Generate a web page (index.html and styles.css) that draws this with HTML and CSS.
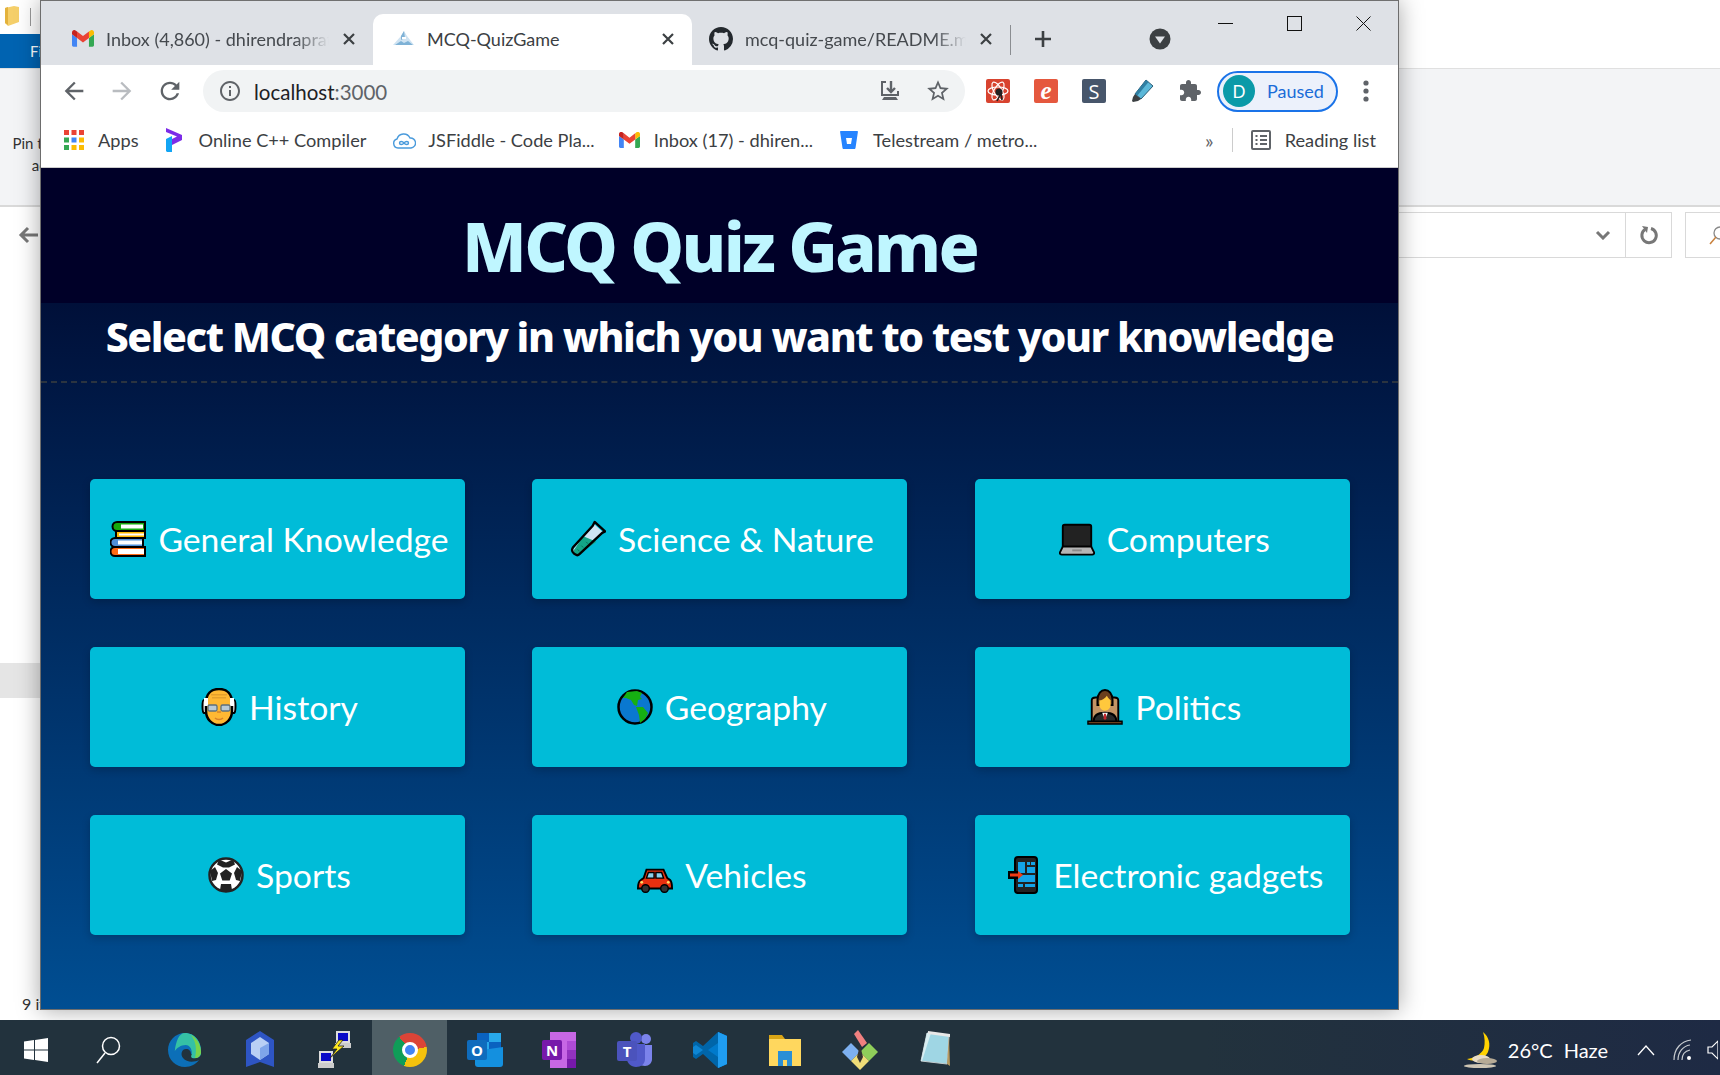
FILE: index.html
```html
<!DOCTYPE html>
<html lang="en">
<head>
  <meta charset="UTF-8">
  <title>MCQ-QuizGame</title>
  <link rel="stylesheet" href="styles.css">
</head>
<body>
  <svg class="defs" width="0" height="0">
    <symbol id="gmail" viewBox="0 0 24 18">
      <path fill="#4285f4" d="M1.6 18H5.5V8.5L0 4.4V16.4C0 17.3.7 18 1.6 18z"/>
      <path fill="#34a853" d="M18.5 18h3.9c.9 0 1.6-.7 1.6-1.6V4.4l-5.5 4.1z"/>
      <path fill="#fbbc04" d="M18.5 1.4v7.1L24 4.4V2.2c0-2-2.3-3.2-3.9-2z"/>
      <path fill="#ea4335" d="M5.5 8.5V1.4L12 6.3l6.5-4.9v7.1L12 13.4z"/>
      <path fill="#c5221f" d="M0 2.2v2.2l5.5 4.1V1.4L3.9.2C2.3-1 0 .2 0 2.2z"/>
    </symbol>
    <symbol id="close" viewBox="0 0 16 16">
      <path d="M3 3l10 10M13 3L3 13" stroke="#3c4043" stroke-width="2.2" fill="none"/>
    </symbol>
  </svg>

  <div class="desktop">
    <!-- file explorer behind the browser -->
    <div class="explorer">
      <div class="ex-title">
        <svg class="ex-folder" width="14" height="20" viewBox="0 0 14 20"><path fill="#f5cf6a" d="M0 2l9-2 5 1v15l-11 4-3-3z"/><path fill="#e3b23c" d="M0 2l3-1v18l-3-2z"/></svg>
        <span class="ex-sep"></span>
      </div>
      <div class="ex-strip"><span class="ex-strip-blue"></span><span class="ex-strip-gray"></span></div>
      <div class="ex-tabs"><span class="ex-file">File</span></div>
      <div class="ex-ribbon"><div class="ex-pin">Pin to Quick<br>access</div></div>
      <div class="ex-address">
        <svg class="ex-back" width="20" height="18" viewBox="0 0 20 18"><path d="M20 9H3M10 2L3 9l7 7" fill="none" stroke="#777" stroke-width="3"/></svg>
        <div class="ex-combo">
          <svg width="16" height="10" viewBox="0 0 16 10"><path d="M2 2l6 6 6-6" fill="none" stroke="#777" stroke-width="3"/></svg>
        </div>
        <div class="ex-refresh">
          <svg width="20" height="20" viewBox="0 0 20 20"><path d="M6 4.500a7.200 7.200 0 1 0 6-1" fill="none" stroke="#777" stroke-width="3"/><path fill="#777" d="M3 1l6 1-1 6z"/></svg>
        </div>
        <div class="ex-search">
          <svg width="20" height="20" viewBox="0 0 20 20"><circle cx="12" cy="8" r="6" fill="none" stroke="#888" stroke-width="1.3"/><path d="M8 12l-6 7" stroke="#c9803c" stroke-width="1.5"/></svg>
        </div>
      </div>
      <div class="ex-selected"></div>
      <div class="ex-status">9 items</div>
    </div>

    <!-- browser window -->
    <div class="browser">
      <div class="tabstrip">
        <div class="tab tab-gmail">
          <svg class="favicon" width="22" height="17"><use href="#gmail"/></svg>
          <span class="tab-title">Inbox (4,860) - dhirendrapratap</span>
          <svg class="tab-close" width="16" height="16"><use href="#close"/></svg>
        </div>
        <div class="tab tab-active">
          <svg class="favicon" width="23" height="17" viewBox="0 0 23 17"><path fill="#cfe3f2" d="M1 15l8-9 3-5 3 5 7 9z"/><path fill="#7fb2d6" d="M9 6l3-5 1 7-4 2zM3 15l6-4 3 2 4-2 5 4z"/><path fill="#fff" d="M10 7h4v2h-4z"/></svg>
          <span class="tab-title">MCQ-QuizGame</span>
          <svg class="tab-close" width="16" height="16"><use href="#close"/></svg>
        </div>
        <div class="tab tab-github">
          <svg class="favicon" width="24" height="24" viewBox="0 0 16 16"><path fill="#24292e" d="M8 0C3.58 0 0 3.58 0 8c0 3.54 2.29 6.53 5.47 7.59.4.07.55-.17.55-.38 0-.19-.01-.82-.01-1.49-2.01.37-2.53-.49-2.69-.94-.09-.23-.48-.94-.82-1.13-.28-.15-.68-.52-.01-.53.63-.01 1.08.58 1.23.82.72 1.21 1.87.87 2.33.66.07-.52.28-.87.51-1.07-1.78-.2-3.64-.89-3.64-3.95 0-.87.31-1.59.82-2.15-.08-.2-.36-1.02.08-2.12 0 0 .67-.21 2.2.82.64-.18 1.32-.27 2-.27.68 0 1.36.09 2 .27 1.53-1.04 2.2-.82 2.2-.82.44 1.1.16 1.92.08 2.12.51.56.82 1.27.82 2.15 0 3.07-1.87 3.75-3.65 3.95.29.25.54.73.54 1.48 0 1.07-.01 1.93-.01 2.2 0 .21.15.46.55.38A8.013 8.013 0 0016 8c0-4.42-3.58-8-8-8z"/></svg>
          <span class="tab-title">mcq-quiz-game/README.md at main</span>
          <svg class="tab-close" width="16" height="16"><use href="#close"/></svg>
        </div>
        <span class="tab-sep"></span>
        <div class="strip-btn">
          <svg width="20" height="20" viewBox="0 0 20 20"><path d="M10 2v16M2 10h16" stroke="#3c4043" stroke-width="2.6"/></svg>
        </div>
        <div class="strip-btn strip-search">
          <svg width="22" height="22" viewBox="0 0 22 22"><circle cx="11" cy="11" r="10.5" fill="#3c4043"/><path fill="#dee1e6" d="M6 8.500h10l-5 7z"/></svg>
        </div>
        <div class="win-controls">
          <div class="win-btn"><span class="win-min"></span></div>
          <div class="win-btn"><span class="win-max"></span></div>
          <div class="win-btn">
            <svg width="15" height="15" viewBox="0 0 15 15"><path d="M.5.5l14 14M14.500.5l-14 14" stroke="#111" stroke-width="1"/></svg>
          </div>
        </div>
      </div>

      <div class="toolbar">
        <div class="tool-btn"><svg width="28" height="28" viewBox="0 0 24 24"><path fill="#5f6368" d="M20 11H7.83l5.59-5.59L12 4l-8 8 8 8 1.41-1.41L7.83 13H20v-2z"/></svg></div>
        <div class="tool-btn"><svg width="28" height="28" viewBox="0 0 24 24"><path fill="#b9bcc0" d="M4 11h12.17l-5.59-5.59L12 4l8 8-8 8-1.41-1.41L16.17 13H4v-2z"/></svg></div>
        <div class="tool-btn"><svg width="28" height="28" viewBox="0 0 24 24"><path fill="#5f6368" d="M17.65 6.35C16.2 4.9 14.21 4 12 4c-4.42 0-7.99 3.58-7.99 8s3.57 8 7.99 8c3.73 0 6.84-2.55 7.73-6h-2.08c-.82 2.33-3.04 4-5.65 4-3.31 0-6-2.69-6-6s2.69-6 6-6c1.66 0 3.14.69 4.22 1.78L13 11h7V4l-2.35 2.35z"/></svg></div>
        <div class="omnibox">
          <svg class="omni-info" width="24" height="24" viewBox="0 0 24 24"><path fill="#5f6368" d="M11 7h2v2h-2zm0 4h2v6h-2zm1-9C6.48 2 2 6.48 2 12s4.48 10 10 10 10-4.48 10-10S17.52 2 12 2zm0 18c-4.41 0-8-3.59-8-8s3.59-8 8-8 8 3.59 8 8-3.59 8-8 8z"/></svg>
          <span class="omni-url">localhost<span class="omni-port">:3000</span></span>
          <div class="omni-actions">
            <div class="tool-btn"><svg width="22" height="22" viewBox="0 0 22 22"><path fill="none" stroke="#5f6368" stroke-width="2" d="M7 2H3v13h16v-4"/><path fill="#5f6368" d="M5 17h12l2 3H3z"/><path fill="none" stroke="#5f6368" stroke-width="2.4" d="M12 1v10M8 8l4 4 4-4"/></svg></div>
            <div class="tool-btn"><svg width="26" height="26" viewBox="0 0 24 24"><path fill="#5f6368" d="M22 9.24l-7.19-.62L12 2 9.19 8.63 2 9.24l5.46 4.73L5.82 21 12 17.27 18.18 21l-1.63-7.03L22 9.24zM12 15.4l-3.76 2.27 1-4.28-3.32-2.88 4.38-.38L12 6.1l1.71 4.04 4.38.38-3.32 2.88 1 4.28L12 15.4z"/></svg></div>
          </div>
        </div>
        <div class="extensions">
          <div class="tool-btn">
            <svg width="24" height="24" viewBox="0 0 24 24"><rect width="24" height="24" rx="2" fill="#d8432f"/><g fill="none" stroke="#fff" stroke-width="1.2"><ellipse cx="12" cy="12" rx="10" ry="4"/><ellipse cx="12" cy="12" rx="10" ry="4" transform="rotate(60 12 12)"/><ellipse cx="12" cy="12" rx="10" ry="4" transform="rotate(120 12 12)"/></g><circle cx="13" cy="13" r="3.5" fill="#222"/><path d="M11 22l3-6M16 21l-1-6" stroke="#222" stroke-width="1.6"/></svg>
          </div>
          <div class="tool-btn"><span class="ext-letter ext-e">e</span></div>
          <div class="tool-btn"><span class="ext-letter ext-s">S</span></div>
          <div class="tool-btn">
            <svg width="24" height="24" viewBox="0 0 24 24"><path fill="#5bb8d9" stroke="#2d5c75" stroke-width="1" d="M16 1l7 6-12 13-6-5z"/><path fill="#2f7fa3" d="M16 1l2.5 2L7 17l-2-2z"/><path fill="#3c4043" d="M5 15l6 5-3 2-5 1-1-1 1-4z"/></svg>
          </div>
          <div class="tool-btn">
            <svg width="24" height="24" viewBox="0 0 24 24"><path fill="#5f6368" d="M20.5 11H19V7c0-1.1-.9-2-2-2h-4V3.5C13 2.12 11.88 1 10.5 1S8 2.12 8 3.5V5H4c-1.1 0-1.99.9-1.99 2v3.8H3.5c1.49 0 2.7 1.21 2.7 2.7s-1.21 2.7-2.7 2.7H2V20c0 1.1.9 2 2 2h3.8v-1.5c0-1.49 1.21-2.7 2.7-2.7 1.49 0 2.7 1.21 2.7 2.7V22H17c1.1 0 2-.9 2-2v-4h1.5c1.38 0 2.5-1.12 2.5-2.5S21.88 11 20.5 11z"/></svg>
          </div>
        </div>
        <div class="profile"><span class="avatar">D</span><span class="profile-label">Paused</span></div>
        <div class="tool-btn tool-menu"><svg width="6" height="24" viewBox="0 0 6 24"><circle cx="3" cy="4" r="2.6" fill="#5f6368"/><circle cx="3" cy="12" r="2.6" fill="#5f6368"/><circle cx="3" cy="20" r="2.6" fill="#5f6368"/></svg></div>
      </div>

      <div class="bookmarks">
        <div class="bm">
          <svg width="20" height="20" viewBox="0 0 20 20"><g fill="#ea4335"><rect width="5" height="5"/><rect x="7.5" width="5" height="5"/><rect x="15" width="5" height="5"/></g><rect y="7.5" width="5" height="5" fill="#34a853"/><rect x="7.5" y="7.5" width="5" height="5" fill="#4285f4"/><rect x="15" y="7.5" width="5" height="5" fill="#fbbc04"/><rect y="15" width="5" height="5" fill="#34a853"/><rect x="7.5" y="15" width="5" height="5" fill="#fbbc04"/><rect x="15" y="15" width="5" height="5" fill="#fbbc04"/></svg>
          <span>Apps</span>
        </div>
        <div class="bm bm-p">
          <svg width="16" height="24" viewBox="0 0 16 24"><path fill="#7c2be8" d="M0 0l16 7v5L6 17v-6l5-2.5L0 4z"/><path fill="#12a5f4" d="M0 11l6-3v16H1l-1-1z"/></svg>
          <span>Online C++ Compiler</span>
        </div>
        <div class="bm bm-cloud">
          <svg width="24" height="20" viewBox="0 0 24 20"><path fill="#fff" stroke="#4a9bdc" stroke-width="1.4" d="M6 18a4.6 4.6 0 0 1-1-9 7 7 0 0 1 13-1 5 5 0 0 1 1 10z"/><path fill="none" stroke="#4a9bdc" stroke-width="1.4" d="M12 13c-1.500-2-4.500-2-4.500 0s3 2 4.500 0c1.500-2 4.500-2 4.500 0s-3 2-4.500 0z"/></svg>
          <span>JSFiddle - Code Pla...</span>
        </div>
        <div class="bm bm-inbox">
          <svg width="21" height="16"><use href="#gmail"/></svg>
          <span>Inbox (17) - dhiren...</span>
        </div>
        <div class="bm bm-bucket">
          <svg width="18" height="20" viewBox="0 0 18 20"><path fill="#2684ff" d="M1 1h16c.6 0 1 .4.9 1L15.500 18c-.1.500-.5 1-1 1H3.500c-.5 0-.9-.5-1-1L.1 2C0 1.400.4 1 1 1z"/><path fill="#fff" d="M6 8h6l-1 6H7z"/></svg>
          <span>Telestream / metro...</span>
        </div>
        <span class="bm-more">»</span>
        <span class="bm-sep"></span>
        <div class="bm bm-reading">
          <svg width="20" height="20" viewBox="0 0 20 20"><rect x="1" y="1" width="18" height="18" rx="1" fill="none" stroke="#5f6368" stroke-width="2"/><path d="M4.500 6h2M9 6h7M4.500 10h2M9 10h7M4.500 14h2M9 14h7" stroke="#5f6368" stroke-width="2"/></svg>
          <span>Reading list</span>
        </div>
      </div>

      <!-- the quiz app -->
      <div class="app">
        <header class="app-header"><h1>MCQ Quiz Game</h1></header>
        <h2 class="app-sub">Select MCQ category in which you want to test your knowledge</h2>
        <div class="categories">
          <button class="cat">
            <svg class="emoji" viewBox="0 0 36 36"><path fill="#ff6a13" stroke="#000" stroke-width="2" d="M5 26h30v9H5a4.500 4.500 0 0 1 0-9z"/><path fill="#fff" d="M8 28h26v5H8z"/><path fill="#4f8fd8" stroke="#000" stroke-width="2" d="M5 17h28v9H5a4.500 4.500 0 0 1 0-9z"/><path fill="#fff" d="M8 19.500h24v4H8z"/><path fill="#ffb900" stroke="#000" stroke-width="2" d="M6 10h29v7H6z"/><path fill="#fff" d="M9 12.500h25v2H9z"/><path fill="#16a90e" stroke="#000" stroke-width="2" d="M7 1h28v9H7a4.500 4.500 0 0 1 0-9z"/><path fill="#fff" d="M11 3.500h22v4H11z"/></svg>
            <span>General Knowledge</span>
          </button>
          <button class="cat">
            <svg class="emoji" viewBox="0 0 38 38"><path fill="#cfe5f4" d="M25 3l10 9L9 36c-3 2-8-2-6-6L24 6z"/><path fill="#13a587" d="M14 16l14 6L9 35c-3 2-6-1-5-4z"/><path fill="none" stroke="#000" stroke-width="2.500" stroke-linejoin="round" d="M26 1l11 10-3 1.500L10 35c-3 3-10-2-7-7L24 5z"/><path d="M12 26l2 2M17 22l2 2M8 30l2 2" stroke="#0a6d58" stroke-width="1"/></svg>
            <span>Science &amp; Nature</span>
          </button>
          <button class="cat">
            <svg class="emoji" viewBox="0 0 38 36"><path fill="#222" stroke="#000" stroke-width="2" d="M6 3h26a2 2 0 0 1 2 2v21H4V5a2 2 0 0 1 2-2z"/><path fill="#b5b5b5" stroke="#000" stroke-width="2" d="M4 26h30l3 6c.500 1.500-.500 2.500-2 2.500H3c-1.500 0-2.500-1-2-2.500z"/><path fill="#8a8a8a" d="M14 29h10v2H14z"/></svg>
            <span>Computers</span>
          </button>
          <button class="cat">
            <svg class="emoji" viewBox="0 0 36 38"><path fill="#fff" stroke="#000" stroke-width="2" d="M3 12h30c2 0 2 12 0 13H3c-2-1-2-13 0-13z"/><path fill="#ffb833" stroke="#000" stroke-width="2.500" d="M18 1c8 0 13 5 13 14v8c0 8-6 14-13 14S5 31 5 23v-8C5 6 10 1 18 1z"/><path fill="#e5a02c" d="M10 6h16v1.500H10zM11 9h14v1.500H11z"/><path fill="#fff" d="M3 10h4v8H3zM29 10h4v8h-4z"/><g fill="#b9cad6" stroke="#5c6f7d" stroke-width="1.300"><rect x="7" y="17" width="9" height="6" rx="1.500"/><rect x="20" y="17" width="9" height="6" rx="1.500"/></g><path fill="none" stroke="#d8822a" stroke-width="1.500" d="M16 24h4M14 30c2 2 6 2 8 0"/></svg>
            <span>History</span>
          </button>
          <button class="cat">
            <svg class="emoji" viewBox="0 0 36 36"><circle cx="18" cy="18" r="16.500" fill="#0a78d0" stroke="#000" stroke-width="2.500"/><path fill="#16b012" d="M10 3l10-1 5 2-2 4 2 2-4 1-1 6-3-1-3-5-5-2-3 0zM19 18l7 0 5 6-3 6-5 4-1-8z"/></svg>
            <span>Geography</span>
          </button>
          <button class="cat">
            <svg class="emoji" viewBox="0 0 38 38"><path fill="#c49464" stroke="#000" stroke-width="2" d="M5 12c0-2 2-3 4-3h20c2 0 4 1 4 3v24H5z"/><path fill="#6b3f1e" stroke="#000" stroke-width="2" d="M11 12c0-7 4-11 8-11s8 4 8 11v5H11z"/><path fill="#ffc83d" d="M13 12c2 0 6-2 8-5 1 2 3 4 4 5v5c0 3-3 6-6 6s-6-3-6-6z"/><path fill="#2a2a2a" stroke="#000" stroke-width="2" d="M7 34c0-6 4-9 12-9s12 3 12 9v2H7z"/><path fill="#fff" d="M16 25h6l-3 7z"/><path fill="#c4262e" d="M18 26h2l.500 5-1.500 2-1.500-2z"/><path fill="#6b3f1e" stroke="#000" stroke-width="1.500" d="M1 34h36v3H1z"/></svg>
            <span>Politics</span>
          </button>
          <button class="cat">
            <svg class="emoji" viewBox="0 0 36 36"><circle cx="18" cy="18" r="16.500" fill="#fff" stroke="#222" stroke-width="2.500"/><path fill="#222" d="M18 12l6 4.500-2.300 7h-7.400L12 16.500zM11 2.500l7 3 7-3 2 5-6 3h-6l-6-3zM2 14l5-4 3 6-2 7-4 1zM34 14l-5-4-3 6 2 7 4 1zM12 33l1-6 10 0 1 6-6 2z"/></svg>
            <span>Sports</span>
          </button>
          <button class="cat">
            <svg class="emoji emoji-car" viewBox="0 0 38 26"><path fill="#e8300f" stroke="#000" stroke-width="2" d="M10 2h18l4 9 3 2c1 1 2 3 2 9H1c0-6 1-8 3-9l3-2z"/><path fill="#8bd0ea" stroke="#000" stroke-width="1.500" d="M12 5h6v6H10zM20 5h6l2 6h-8z"/><circle cx="9" cy="22" r="4" fill="#333" stroke="#000" stroke-width="1.500"/><circle cx="29" cy="22" r="4" fill="#333" stroke="#000" stroke-width="1.500"/><circle cx="5" cy="15.500" r="1.500" fill="#ffe066"/><circle cx="33" cy="15.500" r="1.500" fill="#ffe066"/></svg>
            <span>Vehicles</span>
          </button>
          <button class="cat">
            <svg class="emoji" viewBox="0 0 36 38"><rect x="10" y="1" width="22" height="36" rx="3" fill="#222" stroke="#000" stroke-width="2"/><path fill="#14a4e8" d="M13 6h7v11h-7zM22 6h3v3h-3zM26 6h4v3h-4zM22 11h8v6h-8zM13 19h17v7H13zM13 28h5v3h-5zM20 28h10v3H20z"/><path fill="#000" d="M3 15h10v8H3z"/><path fill="#ee3b14" d="M5 17.500h8V15l5 4-5 4v-2.500H5z"/></svg>
            <span>Electronic gadgets</span>
          </button>
        </div>
      </div>
    </div>
  </div>

  <!-- windows taskbar -->
  <div class="taskbar">
    <div class="tb-item tb-start">
      <svg width="24" height="24" viewBox="0 0 24 24"><path fill="#fff" d="M0 3.500l10-1.400v9.300H0zM11 2l13-2v11.400H11zM0 12.500h10v9.400L0 20.500zM11 12.500h13V24l-13-2z"/></svg>
    </div>
    <div class="tb-item tb-start">
      <svg width="26" height="28" viewBox="0 0 26 28"><circle cx="16" cy="10" r="8.500" fill="none" stroke="#fff" stroke-width="1.500"/><path d="M10 17l-8 10" stroke="#fff" stroke-width="1.500"/></svg>
    </div>
    <div class="tb-apps">
      <div class="tb-item">
        <svg width="36" height="36" viewBox="0 0 36 36"><path fill="#0c6fb8" d="M18 1C8 1 1 9 1 18c0 10 8 17 17 17 6 0 11-3 14-7-4 2-12 3-16-2-3-4-1-9 3-9 3 0 5 2 5 5h10C35 10 28 1 18 1z"/><path fill="#35c1a5" d="M18 1C28 1 35 10 34 22c-1 4-5 5-9 4-2-2 .2-3-.200-5 .200-5-3-8-6-8-5 0-9 3-11 6C9 9 12 1 18 1z"/><path fill="#7ad44a" d="M24 3c6 3 10 10 10 18-1 3-3 5-6 5 2-8 1-17-4-23z"/></svg>
      </div>
      <div class="tb-item">
        <svg width="30" height="38" viewBox="0 0 30 38"><path fill="#2e55c4" d="M15 0l14 9v27l-14-5-14 5V9z"/><path fill="#b9cff5" d="M15 6l9 6v11l-9 6-9-6V12z"/><path fill="#7fa5ea" d="M15 17l9-5v11l-9 6z"/></svg>
      </div>
      <div class="tb-item">
        <svg width="36" height="38" viewBox="0 0 36 38"><rect x="20" y="1" width="12" height="10" fill="#0a0ac8" stroke="#ddd" stroke-width="2"/><path fill="#ccc" d="M18 12h16v5H18z"/><rect x="3" y="21" width="12" height="10" fill="#0a0ac8" stroke="#ddd" stroke-width="2"/><path fill="#ccc" d="M1 32h16v5H1z"/><path fill="#ffe91f" stroke="#222" stroke-width=".8" d="M22 9l-7 9h5l-7 9 14-12h-6l5-6z"/></svg>
      </div>
      <div class="tb-item tb-active">
        <span class="chrome-logo"><span class="chrome-core"></span></span>
      </div>
      <div class="tb-item">
        <svg width="36" height="36" viewBox="0 0 36 36"><path fill="#0a62c0" d="M10 1h24v17H10z"/><path fill="#28a8ea" d="M22 1h12v9H22zM10 10h12v9H10z"/><path fill="#1490df" d="M8 19l28-4v17c0 2-1 3-3 3H11c-2 0-3-1-3-3z"/><rect y="8" width="20" height="20" rx="2" fill="#0f6cbd"/><text class="tb-glyph" x="10" y="24" text-anchor="middle">O</text></svg>
      </div>
      <div class="tb-item">
        <svg width="36" height="36" viewBox="0 0 36 36"><path fill="#c767e5" d="M8 0h26v36H8z"/><path fill="#ae4bd5" d="M25 9h9v9h-9z"/><path fill="#9332bf" d="M25 18h9v9h-9z"/><path fill="#7719aa" d="M25 27h9v9h-9z"/><rect y="8" width="20" height="20" rx="2" fill="#7719aa"/><text class="tb-glyph" x="10" y="24" text-anchor="middle">N</text></svg>
      </div>
      <div class="tb-item">
        <svg width="36" height="36" viewBox="0 0 36 36"><circle cx="29" cy="7" r="5" fill="#7b83eb"/><circle cx="19" cy="6" r="6" fill="#5059c9"/><path fill="#7b83eb" d="M22 13h13v14c0 4-3 7-7 7-5 0-8-3-8-7z"/><path fill="#5059c9" d="M10 12h18v15c0 5-4 8-9 8s-9-4-9-8z"/><rect y="9" width="20" height="20" rx="2" fill="#4b53bc"/><text class="tb-glyph" x="10" y="25" text-anchor="middle">T</text></svg>
      </div>
      <div class="tb-item">
        <svg width="36" height="36" viewBox="0 0 36 36"><path fill="#0065a9" d="M26 0l9 4v28l-9 4-15-14-7 5-3-2v-14l3-2 7 5z"/><path fill="#007acc" d="M26 0l9 4v28l-9 4V25l-10-7 10-7z"/><path fill="#1f9cf0" d="M26 0l9 4v28l-9 4z"/><path fill="#0e86d4" d="M4 13l7 5-7 5-3-2v-6z"/></svg>
      </div>
      <div class="tb-item">
        <svg width="34" height="34" viewBox="0 0 34 34"><path fill="#d9a516" d="M1 2h13l3 4H1z"/><path fill="#ffd75e" d="M1 6h32v27H1z"/><path fill="#2a8fd6" d="M10 18h14v15h-5v-6h-4v6h-5z"/></svg>
      </div>
      <div class="tb-item">
        <svg width="38" height="40" viewBox="0 0 38 40"><path fill="#7db0f0" d="M10 13l9 9-9 9-9-9z"/><path fill="#8fce5a" d="M28 13l9 9-9 9-9-9z"/><path fill="#f0dd78" d="M19 22l9 9-9 9-9-9z"/><path fill="#f08080" d="M17 0l9 13-5 4-8-13z"/><path fill="#333" d="M19 15l3 12-3 6-3-6z"/></svg>
      </div>
      <div class="tb-item">
        <svg width="32" height="40" viewBox="0 0 32 40"><path fill="#9fd6e4" stroke="#c3cdd0" stroke-width="1" d="M8 3l22 3-2 28-26-3z"/><path fill="#d8eef2" d="M8 3l4 0-9 28-1 0z"/><path fill="#b59a62" d="M30 6l1 30-3-2z"/><path fill="#e8e8e8" d="M9 1l22 3v3L9 4z"/></svg>
      </div>
    </div>
    <div class="tray">
      <svg class="tray-moon" width="36" height="38" viewBox="0 0 36 38"><path fill="#ffd200" d="M20 1c6 5 8 12 5 20-3 7-13 11-21 7 8-1 15-5 17-11 1-5 1-10-1-16z"/><ellipse cx="18" cy="28" rx="9" ry="4" fill="#e9dcc5"/><ellipse cx="24" cy="30" rx="10" ry="3" fill="#b7ab96"/><ellipse cx="17" cy="35" rx="16" ry="2" fill="#cfc6b4"/></svg>
      <span class="tray-temp">26°C</span>
      <span class="tray-cond">Haze</span>
      <svg class="tray-chev" width="18" height="12" viewBox="0 0 18 12"><path d="M1 11l8-9 8 9" fill="none" stroke="#fff" stroke-width="1.300"/></svg>
      <svg class="tray-wifi" width="20" height="22" viewBox="0 0 20 22"><g fill="none" stroke="#c8ccd0" stroke-width="1.200"><path d="M1 21C1 10 8 2 18 1"/><path d="M5 21C5 13 10 7 17 6"/><path d="M9 21c0-5 3-9 8-10"/></g><circle cx="16" cy="19" r="2" fill="#fff"/></svg>
      <svg class="tray-vol" width="11" height="22" viewBox="0 0 11 22"><path d="M1 8h4l6-6v18l-6-6H1z" fill="none" stroke="#fff" stroke-width="1.200"/></svg>
    </div>
  </div>
</body>
</html>
```

FILE: styles.css
```css
* {
  box-sizing: border-box;
}
html, body {
  height: 100%;
}
body {
  margin: 0;
  display: flex;
  flex-direction: column;
  overflow: hidden;
  font-family: "Lato", "Open Sans", sans-serif;
  background: #fff;
}
.defs {
  position: absolute;
}
svg {
  display: block;
  flex: none;
}

.desktop {
  flex: 1;
  position: relative;
  overflow: hidden;
}

/* explorer window, only its edges show */
.explorer {
  position: absolute;
  inset: 0;
  display: flex;
  flex-direction: column;
  color: #333;
}
.ex-title {
  height: 34px;
  display: flex;
  align-items: flex-start;
  padding: 6px 0 0 5px;
}
.ex-sep {
  width: 1px;
  height: 18px;
  margin: 2px 0 0 11px;
  background: #999;
}
.ex-strip {
  position: absolute;
  top: 0;
  left: 779px;
  display: flex;
  height: 2px;
}
.ex-strip-blue {
  width: 72px;
  background: #0a78d4;
}
.ex-strip-gray {
  width: 290px;
  background: #e3e3e3;
}
.ex-tabs {
  height: 34px;
  display: flex;
}
.ex-file {
  width: 60px;
  padding-left: 30px;
  background: #0063b1;
  color: #fff;
  font-size: 15px;
  line-height: 34px;
}
.ex-ribbon {
  height: 139px;
  background: #f3f4f6;
  border-top: 1px solid #e0e0e0;
  border-bottom: 2px solid #d9d9d9;
}
.ex-pin {
  width: 84px;
  margin: 63px 0 0 11px;
  text-align: center;
  font-size: 15px;
  line-height: 22px;
}
.ex-address {
  height: 46px;
  margin-top: 5px;
  display: flex;
  align-items: center;
}
.ex-back {
  margin-left: 18px;
}
.ex-combo {
  flex: 1;
  margin-left: 20px;
  height: 46px;
  display: flex;
  align-items: center;
  justify-content: flex-end;
  padding-right: 14px;
  border: 1px solid #d9d9d9;
  border-right: none;
}
.ex-refresh {
  width: 47px;
  height: 46px;
  display: flex;
  align-items: center;
  justify-content: center;
  border: 1px solid #d9d9d9;
}
.ex-search {
  width: 35px;
  height: 46px;
  margin-left: 13px;
  padding: 12px 0 0 22px;
  border: 1px solid #d9d9d9;
  border-right: none;
}
.ex-selected {
  width: 40px;
  height: 35px;
  margin-top: 405px;
  background: #e5e5e5;
}
.ex-status {
  margin-top: auto;
  padding: 0 0 7px 22px;
  font-size: 16px;
}

/* chrome window */
.browser {
  position: absolute;
  left: 40px;
  top: 0;
  width: 1359px;
  height: 1010px;
  display: flex;
  flex-direction: column;
  border: 1px solid #6d6d6d;
  border-top: 1px solid #707070;
  box-shadow: 0 0 22px rgba(0, 0, 0, .35);
  background: #fff;
  color: #3c4043;
}
.tabstrip {
  height: 64px;
  flex: none;
  display: flex;
  align-items: flex-end;
  background: #dee1e6;
}
.tab {
  height: 51px;
  display: flex;
  align-items: center;
  padding-bottom: 2px;
  font-size: 18px;
  color: #45494e;
}
.tab-gmail {
  width: 332px;
  padding-left: 31px;
}
.tab-active {
  width: 319px;
  padding-left: 19px;
  background: #fff;
  border-radius: 10px 10px 0 0;
  color: #3c4043;
}
.tab-github {
  width: 309px;
  padding-left: 17px;
}
.tab-title {
  flex: 1;
  margin-left: 12px;
  white-space: nowrap;
  overflow: hidden;
  -webkit-mask-image: linear-gradient(to right, #000 85%, transparent 100%);
  mask-image: linear-gradient(to right, #000 85%, transparent 100%);
}
.tab-active .tab-title {
  -webkit-mask-image: none;
  mask-image: none;
}
.tab-close {
  margin: 0 12px 0 12px;
}
.tab-gmail .tab-close {
  margin-right: 16px;
}
.tab-active .tab-close {
  margin-right: 16px;
}
.tab-github .tab-close {
  margin-right: 7px;
}
.tab-sep {
  width: 1px;
  height: 30px;
  margin: 0 0 10px 9px;
  background: #8a8d91;
}
.strip-btn {
  width: 40px;
  height: 51px;
  margin-left: 12px;
  padding-bottom: 2px;
  display: flex;
  align-items: center;
  justify-content: center;
}
.strip-search {
  margin-left: 77px;
}
.win-controls {
  margin-left: auto;
  align-self: flex-start;
  display: flex;
}
.win-btn {
  width: 69px;
  height: 44px;
  display: flex;
  align-items: center;
  justify-content: center;
}
.win-min {
  width: 15px;
  height: 1px;
  background: #111;
}
.win-max {
  width: 15px;
  height: 15px;
  border: 1px solid #111;
}

.toolbar {
  height: 52px;
  flex: none;
  display: flex;
  align-items: center;
  padding-left: 9px;
}
.tool-btn {
  width: 48px;
  height: 40px;
  flex: none;
  display: flex;
  align-items: center;
  justify-content: center;
}
.omnibox {
  width: 762px;
  height: 42px;
  margin-left: 9px;
  display: flex;
  align-items: center;
  padding: 0 3px 0 15px;
  background: #f1f3f4;
  border-radius: 21px;
}
.omni-url {
  margin-left: 12px;
  padding-top: 2px;
  font-size: 20.5px;
  color: #202124;
}
.omni-port {
  color: #5f6368;
}
.omni-actions {
  margin-left: auto;
  display: flex;
}
.extensions {
  display: flex;
  margin-left: 9px;
}
.ext-letter {
  width: 24px;
  height: 24px;
  display: flex;
  align-items: center;
  justify-content: center;
  color: #fff;
  border-radius: 2px;
}
.ext-e {
  background: #e5583e;
  font: italic bold 25px "Liberation Serif", serif;
}
.ext-s {
  background: #47566b;
  font: 20px "Open Sans", sans-serif;
}
.profile {
  width: 121px;
  height: 41px;
  margin-left: 3px;
  display: flex;
  align-items: center;
  padding-left: 4px;
  background: #ecf1fb;
  border: 2px solid #1a73e8;
  border-radius: 21px;
}
.avatar {
  width: 32px;
  height: 32px;
  display: flex;
  align-items: center;
  justify-content: center;
  background: #0a9aa8;
  border-radius: 50%;
  color: #fff;
  font-size: 17px;
}
.profile-label {
  margin-left: 12px;
  font-size: 18px;
  color: #1a6cd8;
}
.tool-menu {
  margin-left: 4px;
}

.bookmarks {
  height: 51px;
  flex: none;
  display: flex;
  align-items: center;
  gap: 27px;
  padding: 0 22px 5px 23px;
  border-bottom: 1px solid #ccc;
  font-size: 18.2px;
}
.bm {
  display: flex;
  align-items: center;
  gap: 14px;
  white-space: nowrap;
}
.bm-p {
  gap: 17px;
}
.bm-cloud {
  gap: 12px;
  margin-left: -1px;
}
.bm-inbox {
  margin-left: -3px;
}
.bm-bucket {
  gap: 15px;
}
.bm-more {
  margin-left: auto;
  font-size: 20px;
  color: #5f6368;
}
.bm-sep {
  width: 1px;
  height: 24px;
  margin-left: -9px;
  background: #ccc;
}
.bm-reading {
  margin-left: -9px;
}

/* quiz app */
.app {
  flex: 1;
  background: linear-gradient(#000428, #004e92);
  color: #fff;
}
.app-header {
  height: 135px;
  display: flex;
  align-items: center;
  justify-content: center;
  background: #000028;
}
.app-header h1 {
  margin: 20px 0 0;
  font: 800 68px "Noto Sans", sans-serif;
  letter-spacing: -2.7px;
  color: #bff6ff;
}
.app-sub {
  height: 80px;
  margin: 0;
  display: flex;
  align-items: center;
  justify-content: center;
  padding-bottom: 12px;
  border-bottom: 2px dashed #2b3440;
  font: 800 41px "Noto Sans", sans-serif;
  letter-spacing: -1.42px;
}
.categories {
  display: grid;
  grid-template-columns: repeat(3, 375px);
  column-gap: 67.4px;
  row-gap: 48px;
  padding: 96px 0 0 49px;
}
.cat {
  height: 120px;
  padding: 0 0 0 4px;
  display: flex;
  align-items: center;
  justify-content: center;
  gap: 12px;
  border: none;
  border-radius: 5px;
  background: #00bcd8;
  color: #fff;
  font: 33.7px "Lato", sans-serif;
  box-shadow: 0 3px 8px rgba(0, 0, 0, .2);
}
.emoji {
  width: 36px;
  height: 38px;
}
.emoji-car {
  height: 26px;
  margin-top: 10px;
}

/* taskbar */
.taskbar {
  height: 55px;
  flex: none;
  display: flex;
  background: linear-gradient(to right, #22323d 70%, #1e2a44);
  color: #fff;
}
.tb-item {
  width: 75px;
  height: 55px;
  padding-top: 4px;
  display: flex;
  align-items: center;
  justify-content: center;
}
.tb-start {
  width: 72px;
}
.tb-apps {
  display: flex;
  margin-left: 3px;
}
.tb-active {
  background: #4f5f66;
}
.tb-glyph {
  fill: #fff;
  font: bold 15px "Open Sans", sans-serif;
}
.chrome-logo {
  width: 34px;
  height: 34px;
  display: flex;
  align-items: center;
  justify-content: center;
  border-radius: 50%;
  background: conic-gradient(#db4437 0 80deg, #f4c20d 80deg 200deg, #0f9d58 200deg 320deg, #db4437 320deg);
}
.chrome-core {
  width: 16px;
  height: 16px;
  background: #4285f4;
  border: 3px solid #fff;
  border-radius: 50%;
}
.tray {
  margin-left: auto;
  display: flex;
  align-items: center;
  padding-top: 4px;
  font: 20px "Lato", sans-serif;
}
.tray-temp {
  margin-left: 9px;
}
.tray-cond {
  margin-left: 11px;
}
.tray-chev {
  margin-left: 29px;
}
.tray-wifi {
  margin-left: 18px;
}
.tray-vol {
  margin-left: 14px;
  margin-right: 2px;
}
```
